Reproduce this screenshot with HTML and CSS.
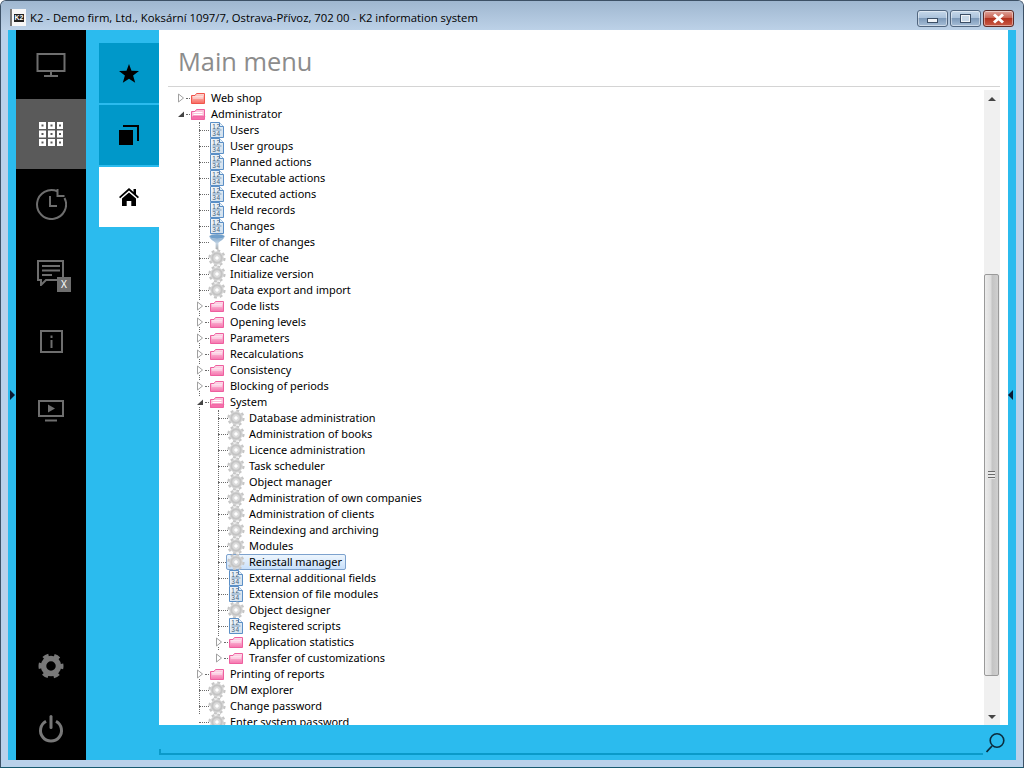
FILE: index.html
```html
<!DOCTYPE html>
<html lang="en">
<head>
<meta charset="utf-8">
<title>K2 information system</title>
<link rel="stylesheet" href="styles.css">
</head>
<body>
<svg class="defs" width="0" height="0" aria-hidden="true">
  <defs>
    <linearGradient id="fp" x1="0" y1="0" x2="0" y2="1"><stop offset="0" stop-color="#fde3ee"/><stop offset="1" stop-color="#f673ad"/></linearGradient>
    <linearGradient id="fr" x1="0" y1="0" x2="0" y2="1"><stop offset="0" stop-color="#fddcd8"/><stop offset="1" stop-color="#f8675e"/></linearGradient>
    <linearGradient id="pg" x1="0" y1="0" x2="1" y2="1"><stop offset="0" stop-color="#f4f8fb"/><stop offset="1" stop-color="#cfdeec"/></linearGradient>
    <radialGradient id="gr"><stop offset="0.3" stop-color="#f8f8f8"/><stop offset="1" stop-color="#c4c4c4"/></radialGradient>
    <linearGradient id="fn" x1="0" y1="0" x2="0" y2="1"><stop offset="0" stop-color="#7fa8cf"/><stop offset="0.5" stop-color="#c6d6e4"/><stop offset="1" stop-color="#a8a8a8"/></linearGradient>
    <symbol id="folder" viewBox="0 0 16 16"><path d="M1.500 5.500v8h13v-10h-8l-1.500 2z" fill="url(#fp)" stroke="#ee5f9f"/><path d="M3 8h10" stroke="#fff" stroke-opacity=".75"/><path d="M3 6.500h10" stroke="#fff" stroke-opacity=".5"/></symbol>
    <symbol id="folder-red" viewBox="0 0 16 16"><path d="M1.500 5.500v8h13v-10h-8l-1.500 2z" fill="url(#fr)" stroke="#f0554c"/><path d="M3 8h10" stroke="#fff" stroke-opacity=".75"/><path d="M3 6.500h10" stroke="#fff" stroke-opacity=".5"/></symbol>
    <symbol id="folder-open" viewBox="0 0 16 16"><path d="M1.500 5.500v8h13v-10h-8l-1.500 2z" fill="#fbc3da" stroke="#ee5f9f"/><path d="M3.500 6.500h9M3.500 8.500h9" stroke="#fff"/><path d="M1.500 13.500l1.500-3.500h12l-1.500 3.500z" fill="#f66fab" stroke="#ee5f9f" stroke-width=".6"/></symbol>
    <symbol id="doc" viewBox="0 0 16 16"><path d="M1.500 .5h9l4 4v11h-13z" fill="url(#pg)" stroke="#5b8fc6"/><path d="M10.500 .5v4h4" fill="#eef4fa" stroke="#5b8fc6"/><path d="M3.500 8h9" stroke="#7d9dbd"/><text x="3.300" y="7" class="ico-num">12</text><text x="3.300" y="14" class="ico-num">34</text></symbol>
    <symbol id="gear" viewBox="0 0 18 18"><circle cx="9" cy="9" r="7.200" fill="none" stroke="#c6c6c6" stroke-width="2.800" stroke-dasharray="2.830 2.830"/><circle cx="9" cy="9" r="4.400" fill="none" stroke="url(#gr)" stroke-width="3.800"/><circle cx="9" cy="9" r="6.200" fill="none" stroke="#dadada"/><circle cx="9" cy="9" r="2.300" fill="#fff" stroke="#bcbcbc" stroke-width=".6"/></symbol>
    <symbol id="funnel" viewBox="0 0 16 16"><ellipse cx="8" cy="2.500" rx="7.500" ry="2.500" fill="#6f9fcb" stroke="#b4c5d4" stroke-width=".6"/><path d="M.8 3.200c1 3 5.200 4.300 5.800 5.800v6l2.800 1v-7c.6-1.500 4.800-2.800 5.800-5.800-3 2-11.400 2-14.400 0z" fill="url(#fn)"/></symbol>
    <symbol id="tri-c" viewBox="0 0 8 10"><path d="M1.500 1l5 4-5 4z" fill="#fff" stroke="#a0a0a0"/></symbol>
    <symbol id="tri-o" viewBox="0 0 8 10"><path d="M7 2.500v5.500h-6z" fill="#444"/></symbol>
  </defs>
</svg>
<header class="titlebar">
  <div class="app-logo"><span class="app-logo-mark">K2</span></div>
  <div class="app-title">K2 - Demo firm, Ltd., Koksární 1097/7, Ostrava-Přívoz, 702 00 - K2 information system</div>
  <div class="win-btns">
    <button class="win-btn" aria-label="Minimize"><span class="glyph-min"></span></button>
    <button class="win-btn" aria-label="Maximize"><span class="glyph-max"></span></button>
    <button class="win-btn win-close" aria-label="Close"><svg width="17" height="11" viewBox="0 0 17 11"><path d="M4 1.500l9 8M13 1.500l-9 8" stroke="#fff" stroke-width="3"/></svg></button>
  </div>
</header>
<div class="client">
  <span class="edge-arrow edge-left"></span>
  <span class="edge-arrow edge-right"></span>
  <nav class="rail">
    <div class="rail-item"><svg width="30" height="26" viewBox="0 0 30 26"><path d="M1.500 2h27v17h-27zM15 19v4M8 24h14" fill="none" stroke="#6e6e6e" stroke-width="2"/></svg></div>
    <div class="rail-item rail-active"><svg width="24" height="24" viewBox="0 0 24 24"><path fill="#fff" fill-rule="evenodd" d="M0 0h7v7H0zM2.500 2.500v2h2v-2zM9 0h7v7H9zM11.500 2.500v2h2v-2zM18 0h6v7h-6zM20 2.500v2h2v-2zM0 8.500h7v7H0zM2.500 11v2h2v-2zM9 8.500h7v7H9zM11.500 11v2h2v-2zM18 8.500h6v7h-6zM20 11v2h2v-2zM0 17h7v7H0zM2.500 19.500v2h2v-2zM9 17h7v7H9zM11.500 19.500v2h2v-2zM18 17h6v7h-6zM20 19.500v2h2v-2z"/></svg></div>
    <div class="rail-item"><svg width="32" height="32" viewBox="0 0 32 32"><path d="M22.500 3.300A14.500 14.500 0 1 0 29.500 10" fill="none" stroke="#6e6e6e" stroke-width="2"/><path d="M22.500 1v7h7" fill="none" stroke="#6e6e6e" stroke-width="2"/><path d="M15 8v10h7" fill="none" stroke="#6e6e6e" stroke-width="2"/></svg></div>
    <div class="rail-item rail-chat"><svg width="28" height="26" viewBox="0 0 28 26"><path d="M1 1h25v19H9l-5 5v-5H1z" fill="none" stroke="#6e6e6e" stroke-width="2"/><path d="M5 6h18M5 10.500h18M5 15h10" stroke="#6e6e6e" stroke-width="2"/></svg><span class="chat-badge">X</span></div>
    <div class="rail-item"><svg width="23" height="23" viewBox="0 0 23 23"><path d="M1 1h21v21H1z" fill="none" stroke="#6e6e6e" stroke-width="2"/><path d="M11.500 5.500v2.500M11.500 10v8" stroke="#6e6e6e" stroke-width="2"/></svg></div>
    <div class="rail-item"><svg width="26" height="22" viewBox="0 0 26 22"><path d="M1 1h24v15H1z" fill="none" stroke="#6e6e6e" stroke-width="2"/><path d="M10 4.500l7 4-7 4z" fill="#6e6e6e"/><path d="M7 20.500h12" stroke="#6e6e6e" stroke-width="2"/></svg></div>
    <div class="rail-spacer"></div>
    <div class="rail-item rail-bottom"><svg width="26" height="26" viewBox="0 0 26 26"><circle cx="13" cy="13" r="7.500" fill="none" stroke="#787878" stroke-width="5.500"/><circle cx="13" cy="13" r="10" fill="none" stroke="#787878" stroke-width="5" stroke-dasharray="5.240 5.240" stroke-dashoffset="2.600"/></svg></div>
    <div class="rail-item rail-bottom"><svg width="26" height="28" viewBox="0 0 26 28"><path d="M8 6.300a10.500 10.500 0 1 0 10 0" fill="none" stroke="#787878" stroke-width="3"/><path d="M13 1.500v11" stroke="#787878" stroke-width="3" stroke-linecap="round"/></svg></div>
  </nav>
  <aside class="tabs">
    <div class="tab"><svg width="20" height="19" viewBox="0 0 20 19"><path d="M10 0l2.500 6.800 7.500.3-5.900 4.500 2.100 7.200L10 14.700l-6.200 4.100 2.100-7.200L0 7.100l7.500-.3z"/></svg></div>
    <div class="tab"><svg width="20" height="20" viewBox="0 0 20 20"><path d="M0 5h14v15H0z"/><path d="M4 1h15v15" fill="none" stroke="#000" stroke-width="2"/></svg></div>
    <div class="tab tab-active"><svg width="20" height="18" viewBox="0 0 20 18"><path d="M10 0L0 9l1.200 1.300L10 2.600l8.800 7.700L20 9l-3-2.700V1h-2.500v3.100z"/><path d="M3 10.500L10 4.500l7 6V18h-4.700v-5H7.700v5H3z"/></svg></div>
  </aside>
  <div class="workspace">
    <main class="panel">
      <h1 class="panel-title">Main menu</h1>
      <div class="tree-wrap">
        <div class="tree">
          <ul class="root">
            <li><div class="row"><span class="exp"><svg><use href="#tri-c"/></svg></span><span class="item"><svg class="ico"><use href="#folder-red"/></svg><span class="label">Web shop</span></span></div></li>
            <li><div class="row"><span class="exp"><svg><use href="#tri-o"/></svg></span><span class="item"><svg class="ico"><use href="#folder-open"/></svg><span class="label">Administrator</span></span></div>
              <ul>
                <li><div class="row"><span class="stub"></span><span class="item"><svg class="ico"><use href="#doc"/></svg><span class="label">Users</span></span></div></li>
                <li><div class="row"><span class="stub"></span><span class="item"><svg class="ico"><use href="#doc"/></svg><span class="label">User groups</span></span></div></li>
                <li><div class="row"><span class="stub"></span><span class="item"><svg class="ico"><use href="#doc"/></svg><span class="label">Planned actions</span></span></div></li>
                <li><div class="row"><span class="stub"></span><span class="item"><svg class="ico"><use href="#doc"/></svg><span class="label">Executable actions</span></span></div></li>
                <li><div class="row"><span class="stub"></span><span class="item"><svg class="ico"><use href="#doc"/></svg><span class="label">Executed actions</span></span></div></li>
                <li><div class="row"><span class="stub"></span><span class="item"><svg class="ico"><use href="#doc"/></svg><span class="label">Held records</span></span></div></li>
                <li><div class="row"><span class="stub"></span><span class="item"><svg class="ico"><use href="#doc"/></svg><span class="label">Changes</span></span></div></li>
                <li><div class="row"><span class="stub"></span><span class="item"><svg class="ico"><use href="#funnel"/></svg><span class="label">Filter of changes</span></span></div></li>
                <li><div class="row"><span class="stub"></span><span class="item"><svg class="ico ico-gear"><use href="#gear"/></svg><span class="label">Clear cache</span></span></div></li>
                <li><div class="row"><span class="stub"></span><span class="item"><svg class="ico ico-gear"><use href="#gear"/></svg><span class="label">Initialize version</span></span></div></li>
                <li><div class="row"><span class="stub"></span><span class="item"><svg class="ico ico-gear"><use href="#gear"/></svg><span class="label">Data export and import</span></span></div></li>
                <li><div class="row"><span class="exp"><svg><use href="#tri-c"/></svg></span><span class="item"><svg class="ico"><use href="#folder"/></svg><span class="label">Code lists</span></span></div></li>
                <li><div class="row"><span class="exp"><svg><use href="#tri-c"/></svg></span><span class="item"><svg class="ico"><use href="#folder"/></svg><span class="label">Opening levels</span></span></div></li>
                <li><div class="row"><span class="exp"><svg><use href="#tri-c"/></svg></span><span class="item"><svg class="ico"><use href="#folder"/></svg><span class="label">Parameters</span></span></div></li>
                <li><div class="row"><span class="exp"><svg><use href="#tri-c"/></svg></span><span class="item"><svg class="ico"><use href="#folder"/></svg><span class="label">Recalculations</span></span></div></li>
                <li><div class="row"><span class="exp"><svg><use href="#tri-c"/></svg></span><span class="item"><svg class="ico"><use href="#folder"/></svg><span class="label">Consistency</span></span></div></li>
                <li><div class="row"><span class="exp"><svg><use href="#tri-c"/></svg></span><span class="item"><svg class="ico"><use href="#folder"/></svg><span class="label">Blocking of periods</span></span></div></li>
                <li><div class="row"><span class="exp"><svg><use href="#tri-o"/></svg></span><span class="item"><svg class="ico"><use href="#folder-open"/></svg><span class="label">System</span></span></div>
                  <ul>
                    <li><div class="row"><span class="stub"></span><span class="item"><svg class="ico ico-gear"><use href="#gear"/></svg><span class="label">Database administration</span></span></div></li>
                    <li><div class="row"><span class="stub"></span><span class="item"><svg class="ico ico-gear"><use href="#gear"/></svg><span class="label">Administration of books</span></span></div></li>
                    <li><div class="row"><span class="stub"></span><span class="item"><svg class="ico ico-gear"><use href="#gear"/></svg><span class="label">Licence administration</span></span></div></li>
                    <li><div class="row"><span class="stub"></span><span class="item"><svg class="ico ico-gear"><use href="#gear"/></svg><span class="label">Task scheduler</span></span></div></li>
                    <li><div class="row"><span class="stub"></span><span class="item"><svg class="ico ico-gear"><use href="#gear"/></svg><span class="label">Object manager</span></span></div></li>
                    <li><div class="row"><span class="stub"></span><span class="item"><svg class="ico ico-gear"><use href="#gear"/></svg><span class="label">Administration of own companies</span></span></div></li>
                    <li><div class="row"><span class="stub"></span><span class="item"><svg class="ico ico-gear"><use href="#gear"/></svg><span class="label">Administration of clients</span></span></div></li>
                    <li><div class="row"><span class="stub"></span><span class="item"><svg class="ico ico-gear"><use href="#gear"/></svg><span class="label">Reindexing and archiving</span></span></div></li>
                    <li><div class="row"><span class="stub"></span><span class="item"><svg class="ico ico-gear"><use href="#gear"/></svg><span class="label">Modules</span></span></div></li>
                    <li><div class="row"><span class="stub"></span><span class="item item-selected"><svg class="ico ico-gear"><use href="#gear"/></svg><span class="label">Reinstall manager</span></span></div></li>
                    <li><div class="row"><span class="stub"></span><span class="item"><svg class="ico"><use href="#doc"/></svg><span class="label">External additional fields</span></span></div></li>
                    <li><div class="row"><span class="stub"></span><span class="item"><svg class="ico"><use href="#doc"/></svg><span class="label">Extension of file modules</span></span></div></li>
                    <li><div class="row"><span class="stub"></span><span class="item"><svg class="ico ico-gear"><use href="#gear"/></svg><span class="label">Object designer</span></span></div></li>
                    <li><div class="row"><span class="stub"></span><span class="item"><svg class="ico"><use href="#doc"/></svg><span class="label">Registered scripts</span></span></div></li>
                    <li><div class="row"><span class="exp"><svg><use href="#tri-c"/></svg></span><span class="item"><svg class="ico"><use href="#folder"/></svg><span class="label">Application statistics</span></span></div></li>
                    <li><div class="row"><span class="exp"><svg><use href="#tri-c"/></svg></span><span class="item"><svg class="ico"><use href="#folder"/></svg><span class="label">Transfer of customizations</span></span></div></li>
                  </ul>
                </li>
                <li><div class="row"><span class="exp"><svg><use href="#tri-c"/></svg></span><span class="item"><svg class="ico"><use href="#folder"/></svg><span class="label">Printing of reports</span></span></div></li>
                <li><div class="row"><span class="stub"></span><span class="item"><svg class="ico ico-gear"><use href="#gear"/></svg><span class="label">DM explorer</span></span></div></li>
                <li><div class="row"><span class="stub"></span><span class="item"><svg class="ico ico-gear"><use href="#gear"/></svg><span class="label">Change password</span></span></div></li>
                <li><div class="row"><span class="stub"></span><span class="item"><svg class="ico ico-gear"><use href="#gear"/></svg><span class="label">Enter system password</span></span></div></li>
              </ul>
            </li>
          </ul>
        </div>
        <div class="scrollbar">
          <div class="sb-btn"><span class="sb-up"></span></div>
          <div class="sb-track"><div class="sb-thumb"><span class="sb-grip"></span></div></div>
          <div class="sb-btn"><span class="sb-down"></span></div>
        </div>
      </div>
    </main>
    <div class="searchbar">
      <div class="search-field"></div>
      <svg class="search-ico" width="20" height="21" viewBox="0 0 20 21"><circle cx="11" cy="8.500" r="6.800" fill="none" stroke="#0b2c3d" stroke-width="1.600"/><path d="M6 14L.5 20" stroke="#0b2c3d" stroke-width="1.800"/></svg>
    </div>
  </div>
</div>
</body>
</html>
```

FILE: styles.css
```css
* { box-sizing: border-box; }
html { margin: 0; height: 100%; background: #fff; }
body {
  margin: 0;
  width: 1024px;
  height: 768px;
  overflow: hidden;
  display: flex;
  flex-direction: column;
  background: #b9d1ea;
  border: 1px solid #3d5166;
  border-bottom-color: #17596e;
  border-radius: 6px 6px 0 0;
  font-family: "Noto Sans", sans-serif;
}
.defs { position: absolute; }
.ico-num { font: 6.500px "Liberation Sans", sans-serif; fill: #46617c; letter-spacing: .6px; }

.titlebar {
  height: 29px;
  flex: none;
  display: flex;
  align-items: flex-start;
  padding: 0 9px;
  background: linear-gradient(#9fb7d0, #bcd1e7);
}
.app-logo {
  width: 16px;
  height: 17px;
  margin-top: 8px;
  background: #f7f7f7;
  border-left: 2px solid #777;
  display: flex;
  align-items: center;
  justify-content: center;
}
.app-logo-mark {
  font: bold 7px/8px "Liberation Sans", sans-serif;
  color: #fff;
  background: #222;
  padding: 0 1px;
}
.app-title {
  margin: 7px 0 0 4px;
  font: 11.300px/20px "Open Sans", sans-serif;
  color: #000;
  white-space: nowrap;
  flex: 1;
}
.win-btns { display: flex; gap: 2px; margin-top: 9px; }
.win-btn {
  width: 31px;
  height: 17px;
  padding: 0;
  border: 1px solid #51667f;
  border-radius: 3px;
  background: linear-gradient(#c6d8ea, #a9c1da 48%, #7e9ab9 50%, #a6bed7);
  box-shadow: inset 0 0 0 1px rgba(255,255,255,.45);
  display: flex;
  align-items: center;
  justify-content: center;
}
.win-close {
  background: linear-gradient(#e0a59c, #c9604f 48%, #b3331f 50%, #c95a46);
  border-color: #5e2c28;
}
.glyph-min { width: 11px; height: 5px; margin-top: 3px; background: #f0f4f8; border: 1px solid #3c4f66; }
.glyph-max { width: 11px; height: 9px; background: #c7d7e7; border: 2px solid #f0f4f8; outline: 1px solid #3c4f66; outline-offset: -1px; }

.client {
  flex: 1;
  position: relative;
  display: flex;
  min-height: 0;
  margin: 0 7px 7px;
  background: #2bbbee;
}
.edge-arrow {
  position: absolute;
  top: 360px;
  width: 0;
  height: 0;
  border-top: 5px solid transparent;
  border-bottom: 5px solid transparent;
}
.edge-left { left: 2px; border-left: 5px solid #0b1a33; }
.edge-right { right: 3px; border-right: 5px solid #0b1a33; }

.rail {
  width: 70px;
  margin-left: 8px;
  flex: none;
  background: #000;
  display: flex;
  flex-direction: column;
}
.rail-item {
  height: 69px;
  flex: none;
  display: flex;
  align-items: center;
  justify-content: center;
  position: relative;
}
.rail-active { height: 70px; background: #5a5a5a; }
.rail-spacer { flex: 1; }
.rail-bottom { height: 63px; }
.chat-badge {
  position: absolute;
  left: 41px;
  top: 39px;
  width: 14px;
  height: 15px;
  background: #6e6e6e;
  color: #fff;
  font: 10px/15px "Noto Sans", sans-serif;
  text-align: center;
}

.tabs {
  width: 73px;
  flex: none;
  padding: 13px 0 0 13px;
  display: flex;
  flex-direction: column;
  gap: 2px;
}
.tab {
  height: 60px;
  background: #0098c9;
  display: flex;
  align-items: center;
  justify-content: center;
}
.tab-active { background: #fff; }

.workspace {
  flex: 1;
  min-width: 0;
  display: flex;
  flex-direction: column;
  margin-right: 8px;
}
.panel {
  height: 695px;
  flex: none;
  background: #fff;
  padding: 0 8px 0 9px;
  display: flex;
  flex-direction: column;
}
.panel-title {
  height: 57px;
  flex: none;
  margin: 0 0 3px;
  padding: 13px 0 0 10px;
  border-bottom: 1px solid #d4d4d4;
  font: 400 25.400px/36px "Open Sans", sans-serif;
  color: #8c8c8c;
}
.tree-wrap { flex: 1; min-height: 0; display: flex; }
.tree { flex: 1; min-width: 0; overflow: hidden; padding-left: 4px; }
.tree ul { list-style: none; margin: 0; padding: 0 0 0 19px; position: relative; }
.tree ul.root { padding-left: 0; }
.tree ul ul::before {
  content: "";
  position: absolute;
  left: 27px;
  top: 0;
  bottom: 16px;
  border-left: 1px dotted #6a6a6a;
}
.row { height: 16px; display: flex; align-items: center; position: relative; white-space: nowrap; }
.exp, .stub { width: 18px; height: 16px; flex: none; position: relative; }
.stub::after, .exp::after {
  content: "";
  position: absolute;
  top: 8px;
  right: 0;
  border-top: 1px dotted #6a6a6a;
}
.stub::after { left: 8px; }
.exp::after { left: 14px; }
.exp svg {
  position: absolute;
  left: 5px;
  top: 3px;
  width: 8px;
  height: 10px;
  background: #fff;
  z-index: 1;
}
.item {
  display: flex;
  align-items: center;
  height: 16px;
  margin-left: -2px;
  padding: 0 3px 0 1px;
  border: 1px solid transparent;
  border-radius: 2px;
  position: relative;
}
.item-selected {
  background: linear-gradient(#edf5fd, #c9e0fb);
  border-color: #7da2ce;
}
.ico { width: 16px; height: 16px; flex: none; }
.ico-gear { width: 18px; height: 18px; margin: 0 -1px; }
.label {
  margin-left: 5px;
  font: 10.950px/16px "Noto Sans", sans-serif;
  color: #000;
}

.scrollbar {
  width: 16px;
  flex: none;
  background: #f0f0f0;
  display: flex;
  flex-direction: column;
}
.sb-btn { height: 17px; flex: none; display: flex; align-items: center; justify-content: center; }
.sb-up, .sb-down { width: 0; height: 0; border-left: 4px solid transparent; border-right: 4px solid transparent; }
.sb-up { border-bottom: 4px solid #444; }
.sb-down { border-top: 4px solid #444; }
.sb-track { flex: 1; padding-top: 167px; }
.sb-thumb {
  height: 402px;
  width: 15px;
  border: 1px solid #9a9a9a;
  border-radius: 2px;
  background: linear-gradient(90deg, #ececec, #dcdcdc 45%, #c4c4c4 55%, #cfcfcf);
  display: flex;
  align-items: center;
  justify-content: center;
}
.sb-grip {
  width: 7px;
  height: 8px;
  background: repeating-linear-gradient(#6a6a6a 0 1px, #e8e8e8 1px 3px);
}

.searchbar {
  flex: 1;
  display: flex;
  align-items: flex-start;
  padding-top: 7px;
}
.search-field {
  width: 824px;
  height: 6px;
  margin-top: 17px;
  border-left: 2px solid #0a9ac9;
  border-bottom: 2px solid #0a9ac9;
}
.search-ico { margin: 0 0 0 3px; }
```
